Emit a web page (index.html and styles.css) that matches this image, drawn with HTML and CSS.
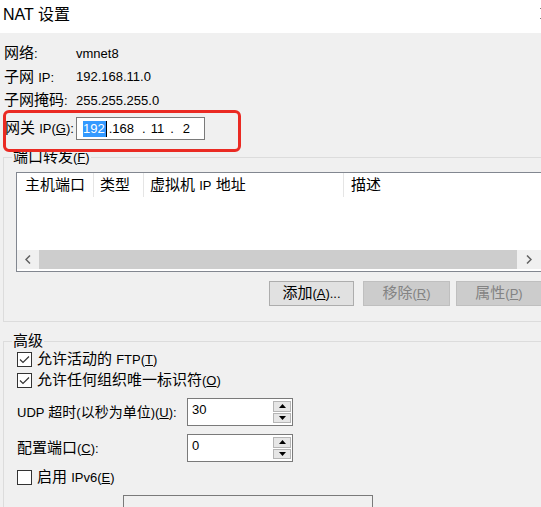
FILE: index.html
```html
<!DOCTYPE html>
<html lang="zh-CN">
<head>
<meta charset="utf-8">
<title>NAT 设置</title>
<link rel="stylesheet" href="styles.css">
</head>
<body>
<div class="window">
  <header class="titlebar">
    <span class="title">NAT 设置</span>
    <svg class="close" width="11" height="11" viewBox="0 0 11 11"><path d="M0.5 0.5 L10.5 10.5 M10.5 0.5 L0.5 10.5" stroke="#000" stroke-width="1" fill="none"/></svg>
  </header>
  <main class="dialog">
    <div class="info">
      <div class="info-row"><span class="lbl">网络<span class="lat">:</span></span><span class="val">vmnet8</span></div>
      <div class="info-row"><span class="lbl">子网 <span class="lat">IP:</span></span><span class="val">192.168.11.0</span></div>
      <div class="info-row"><span class="lbl">子网掩码<span class="lat">:</span></span><span class="val">255.255.255.0</span></div>
    </div>
    <div class="gateway">
      <span class="lbl gw-lbl">网关 <span class="lat">IP(<u>G</u>):</span></span>
      <div class="ipbox">
        <span class="sel">192</span><span class="caret"></span><span class="oct o2">.168</span><span class="dot d1">.</span><span class="oct o3">11</span><span class="dot d2">.</span><span class="oct o4">2</span>
      </div>
    </div>

    <section class="group forward">
      <div class="group-title">端口转发<span class="lat">(<u>F</u>)</span></div>
      <div class="listview">
        <div class="lv-head">
          <div class="col c1">主机端口</div>
          <div class="col c2">类型</div>
          <div class="col c3">虚拟机 <span class="lat">IP</span> 地址</div>
          <div class="col c4">描述</div>
        </div>
        <div class="lv-body"></div>
        <div class="hscroll">
          <div class="sb-btn sb-left"><svg width="6" height="9" viewBox="0 0 6 9"><path d="M5 0.5 L1 4.5 L5 8.5" stroke="#606060" stroke-width="1.5" fill="none"/></svg></div>
          <div class="sb-thumb"></div>
          <div class="sb-btn sb-right"><svg width="6" height="9" viewBox="0 0 6 9"><path d="M1 0.5 L5 4.5 L1 8.5" stroke="#606060" stroke-width="1.5" fill="none"/></svg></div>
        </div>
      </div>
      <div class="buttons">
        <button class="btn b-add">添加<span class="lat">(<u>A</u>)...</span></button>
        <button class="btn b-del" disabled>移除<span class="lat">(<u>R</u>)</span></button>
        <button class="btn b-prop" disabled>属性<span class="lat">(<u>P</u>)</span></button>
      </div>
    </section>

    <section class="group advanced">
      <div class="group-title">高级</div>
      <div class="check-row">
        <span class="checkbox"><svg width="13" height="13" viewBox="0 0 13 13"><path d="M2 6.5 L5 9.5 L11 3.5" stroke="#333" stroke-width="1.2" fill="none"/></svg></span>
        <span class="check-lbl">允许活动的 <span class="lat">FTP(<u>T</u>)</span></span>
      </div>
      <div class="check-row">
        <span class="checkbox"><svg width="13" height="13" viewBox="0 0 13 13"><path d="M2 6.5 L5 9.5 L11 3.5" stroke="#333" stroke-width="1.2" fill="none"/></svg></span>
        <span class="check-lbl">允许任何组织唯一标识符<span class="lat">(<u>O</u>)</span></span>
      </div>
      <div class="field-row udp">
        <span class="field-lbl narrow"><span class="lat">UDP</span> 超时<span class="lat">(</span>以秒为单位<span class="lat">)(<u>U</u>):</span></span>
        <div class="spin">
          <span class="spin-text">30</span>
          <div class="spin-btns">
            <span class="spin-btn"><svg width="7" height="4" viewBox="0 0 7 4"><path d="M0 4 L3.5 0 L7 4 Z" fill="#000"/></svg></span>
            <span class="spin-btn"><svg width="7" height="4" viewBox="0 0 7 4"><path d="M0 0 L7 0 L3.5 4 Z" fill="#000"/></svg></span>
          </div>
        </div>
      </div>
      <div class="field-row port">
        <span class="field-lbl">配置端口<span class="lat">(<u>C</u>):</span></span>
        <div class="spin">
          <span class="spin-text">0</span>
          <div class="spin-btns">
            <span class="spin-btn"><svg width="7" height="4" viewBox="0 0 7 4"><path d="M0 4 L3.5 0 L7 4 Z" fill="#000"/></svg></span>
            <span class="spin-btn"><svg width="7" height="4" viewBox="0 0 7 4"><path d="M0 0 L7 0 L3.5 4 Z" fill="#000"/></svg></span>
          </div>
        </div>
      </div>
      <div class="check-row ipv6">
        <span class="checkbox"></span>
        <span class="check-lbl">启用 <span class="lat">IPv6(<u>E</u>)</span></span>
      </div>
      <div class="prefix-box"></div>
    </section>
  </main>
  <div class="annot"></div>
</div>
</body>
</html>
```

FILE: styles.css
```css
* { box-sizing: border-box; }

body {
  margin: 0;
  background: #f0f0f0;
  overflow: hidden;
  font-family: "Liberation Sans", "Noto Sans CJK SC", sans-serif;
  font-size: 15px;
  line-height: 20px;
  color: #000;
}

.lat { font-size: 13px; }

.window {
  position: relative;
  width: 560px;
}

.titlebar {
  height: 33px;
  background: #fff;
  display: flex;
  align-items: flex-start;
  padding-left: 3px;
}

.title {
  font-size: 16px;
  line-height: 20px;
  margin-top: 5px;
}

.close {
  margin-left: auto;
  margin-right: 9px;
  margin-top: 8px;
}

.dialog {
  padding-top: 9px;
}

.info-row {
  display: flex;
  align-items: center;
  height: 23.5px;
  padding-left: 4px;
}

.lbl { width: 72px; flex: none; }
.val { font-size: 13px; }

.gateway {
  display: flex;
  align-items: center;
  height: 23px;
  margin-top: 4.5px;
  padding-left: 5px;
}

.gw-lbl { width: 71px; }

.ipbox {
  width: 129px;
  height: 23px;
  border: 1px solid #7a7a7a;
  background: #fff;
  display: flex;
  align-items: center;
  padding-left: 6px;
  font-size: 13px;
  line-height: 16px;
}

.sel {
  background: #3399ff;
  color: #fff;
  padding-right: 1px;
}

.caret {
  width: 1px;
  height: 16px;
  background: #000;
}

.oct.o2 { margin-left: 2px; }
.dot.d1 { margin-left: 8px; }
.oct.o3 { margin-left: 5px; }
.dot.d2 { margin-left: 6px; }
.oct.o4 { margin-left: 9px; }

/* group boxes */
.group {
  border: 1px solid #dcdcdc;
  margin-left: 3px;
  width: 553px;
}

.group-title {
  width: max-content;
  margin: -9px 0 0 8px;
  padding: 0 1px;
  background: #f0f0f0;
  line-height: 16px;
  height: 16px;
}

.forward {
  margin-top: 17px;
  padding-bottom: 15px;
}

.listview {
  margin: 7px 0 0 12px;
  width: 526px;
  height: 100px;
  border: 1px solid #828790;
  background: #fff;
  display: flex;
  flex-direction: column;
  padding-bottom: 2px;
}

.lv-head {
  display: flex;
  height: 24px;
  flex: none;
}

.col {
  height: 24px;
  line-height: 24px;
  border-right: 1px solid #e5e5e5;
  white-space: nowrap;
}

.c1 { width: 77px; padding-left: 8px; }
.c2 { width: 50px; padding-left: 6px; }
.c3 { width: 200px; padding-left: 6px; }
.c4 { flex: 1; padding-left: 7px; border-right: none; }

.lv-body { height: 53px; flex: none; }

.hscroll {
  display: flex;
  height: 19px;
  background: #f0f0f0;
}

.sb-btn {
  display: flex;
  align-items: center;
  justify-content: center;
}

.sb-left { width: 22px; }
.sb-right { width: 24px; }
.sb-thumb { flex: 1; background: #cdcdcd; }

.buttons {
  display: flex;
  justify-content: flex-end;
  width: 526px;
  margin: 9px 0 0 12px;
}

.btn {
  height: 25px;
  border: 1px solid #adadad;
  background: #e1e1e1;
  font: inherit;
  color: #000;
  padding: 0;
  line-height: 22px;
  white-space: nowrap;
}

.btn:disabled {
  background: #cccccc;
  border-color: #bfbfbf;
  color: #838383;
}

.b-add { width: 85px; }
.b-del { width: 87px; margin-left: 9px; }
.b-prop { width: 86px; margin-left: 6px; }

.advanced {
  margin-top: 19px;
  height: 200px;
}

.check-row {
  display: flex;
  align-items: center;
  height: 21px;
  padding-left: 13px;
}

.advanced .check-row:first-of-type { margin-top: 5px; }

.checkbox {
  width: 15px;
  height: 15px;
  border: 1px solid #333;
  background: #fff;
  display: flex;
  flex: none;
}

.check-lbl { margin-left: 5px; white-space: nowrap; }

.field-row {
  display: flex;
  align-items: center;
  padding-left: 13px;
}

.field-lbl { width: 170px; flex: none; white-space: nowrap; }
.field-lbl.narrow { font-size: 14px; }

.udp { margin-top: 7px; }
.port { margin-top: 8px; }
.ipv6 { margin-top: 5px; }

.spin {
  width: 106px;
  height: 28px;
  border: 1px solid #7a7a7a;
  background: #fff;
  display: flex;
}

.spin-text {
  flex: 1;
  padding-left: 4px;
  font-size: 13px;
  line-height: 22px;
}

.spin-btns {
  width: 19px;
  display: flex;
  flex-direction: column;
  padding: 2px 1px 2px 0;
  gap: 1px;
}

.spin-btn {
  flex: 1;
  background: #e6e6e6;
  border: 1px solid #b5b5b5;
  display: flex;
  align-items: center;
  justify-content: center;
}

.prefix-box {
  width: 250px;
  height: 24px;
  margin: 7px 0 0 119px;
  border: 1px solid #7a7a7a;
  background: #f0f0f0;
}

/* red annotation rectangle drawn over the gateway field */
.annot {
  position: absolute;
  left: 3px;
  top: 110px;
  width: 238px;
  height: 42px;
  border: 3px solid #ea2a23;
  border-radius: 6px;
  pointer-events: none;
}
```
